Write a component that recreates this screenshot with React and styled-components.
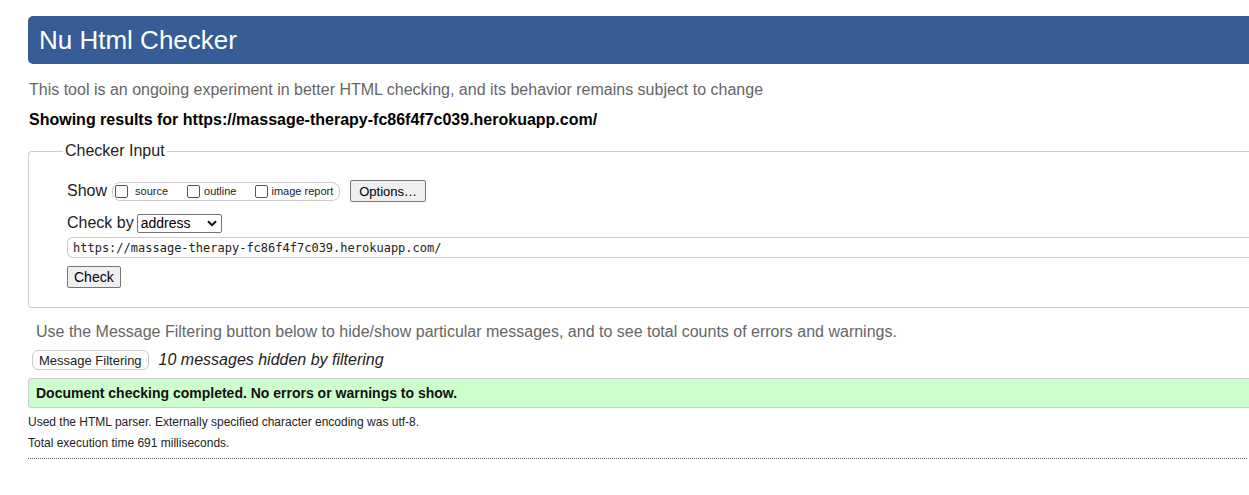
import React from 'react';
import styled, { createGlobalStyle } from 'styled-components';

const GlobalStyle = createGlobalStyle`
  html, body {
    margin: 0;
    padding: 0;
    overflow: hidden;
    background: #fff;
  }
  body {
    font-family: "Liberation Sans", Arial, sans-serif;
    color: #000;
  }
`;

const Page = styled.div`
  padding: 16px 0 30px 28px;
  width: 1250px;
`;

const Header = styled.h1`
  margin: 0;
  height: 48px;
  display: flex;
  align-items: center;
  padding-left: 11px;
  background: #365d95;
  color: #fff;
  font-weight: normal;
  font-size: 26px;
  border-radius: 5px 0 0 5px;
`;

const Tagline = styled.p`
  margin: 17px 0 0 1px;
  font-size: 16px;
  line-height: 18px;
  color: #666;
`;

const Results = styled.p`
  margin: 12px 0 0 1px;
  font-size: 16px;
  line-height: 18px;
  font-weight: bold;
`;

const Fieldset = styled.fieldset`
  margin: 13px 0 0 0;
  padding: 20px 0 19px 38px;
  border: 1px solid #ccc;
  border-right: none;
  border-radius: 4px 0 0 4px;
  min-width: 0;
`;

const Legend = styled.legend`
  margin-left: -4px;
  padding: 0 2px;
  font-size: 16px;
  line-height: 18px;
  color: #222;
`;

const Row = styled.div`
  display: flex;
  align-items: center;
  height: ${p => p.$h || 22}px;
  margin-top: ${p => p.$mt || 0}px;
`;

const Label = styled.span`
  font-size: 16px;
  color: #222;
  margin-right: ${p => p.$mr || 0}px;
`;

const Group = styled.div`
  display: flex;
  align-items: center;
  height: 17px;
  padding: 0 6px 0 2px;
  border: 1px solid #ccc;
  border-radius: 8px;
  margin-right: 10px;
`;

const CheckItem = styled.label`
  display: flex;
  align-items: center;
  font-size: 11px;
  color: #222;
  margin-right: ${p => p.$mr || 0}px;
`;

const Box = styled.span`
  display: inline-block;
  width: 11px;
  height: 11px;
  border: 1px solid #555;
  border-radius: 2px;
  background: #fff;
  margin-right: ${p => p.$gap}px;
`;

const Button = styled.button`
  font-family: "Liberation Sans", Arial, sans-serif;
  font-size: ${p => p.$fs || 13}px;
  height: ${p => p.$h || 22}px;
  padding: 0 ${p => p.$px || 7}px;
  background: #efefef;
  border: 1px solid #767676;
  border-radius: 2px;
  color: #000;
`;

const SelectWrap = styled.div`
  position: relative;
  height: 19px;
`;

const Select = styled.select`
  appearance: none;
  -webkit-appearance: none;
  height: 19px;
  width: 85px;
  padding: 0 0 0 3px;
  font-family: "Liberation Sans", Arial, sans-serif;
  font-size: 14px;
  background: #fff;
  color: #000;
  border: 1px solid #767676;
  border-radius: 2px;
`;

const Chevron = styled.svg`
  position: absolute;
  right: 5px;
  top: 6px;
  pointer-events: none;
`;

const UrlInput = styled.div`
  height: 19px;
  margin-top: 3px;
  display: flex;
  align-items: center;
  padding-left: 5px;
  border: 1px solid #ccc;
  border-right: none;
  border-radius: 6px 0 0 6px;
  font-family: "DejaVu Sans Mono", "Liberation Mono", monospace;
  font-size: 12px;
  color: #222;
`;

const Note = styled.p`
  margin: 15px 0 0 8px;
  font-size: 16px;
  line-height: 18px;
  color: #666;
`;

const FilterButton = styled.button`
  font-family: "Liberation Sans", Arial, sans-serif;
  font-size: 13px;
  height: 20px;
  padding: 0 6px;
  margin-left: 4px;
  background: #fff;
  border: 1px solid #ccc;
  border-radius: 6px;
  color: #222;
`;

const Hidden = styled.em`
  font-size: 16px;
  color: #222;
  margin-left: 10px;
`;

const Success = styled.div`
  margin-top: 7px;
  height: 28px;
  display: flex;
  align-items: center;
  padding-left: 7px;
  background: #ccffcc;
  border: 1px solid #ccc;
  border-right: none;
  border-radius: 4px 0 0 4px;
  font-size: 14px;
  font-weight: bold;
  color: #111;
`;

const Small = styled.p`
  margin: 7px 0 0 0;
  font-size: 12px;
  line-height: 14px;
  color: #222;
`;

const Rule = styled.hr`
  margin: 8px 0 0 0;
  width: 1219px;
  border: none;
  border-top: 1px dotted #666;
`;

const url = 'https://massage-therapy-fc86f4f7c039.herokuapp.com/';

export default function App() {
    return (
        <Page>
            <GlobalStyle />
            <Header>Nu Html Checker</Header>
            <Tagline>This tool is an ongoing experiment in better HTML checking, and its behavior remains subject to change</Tagline>
            <Results>Showing results for {url}</Results>

            <Fieldset>
                <Legend>Checker Input</Legend>
                <Row>
                    <Label $mr={5}>Show</Label>
                    <Group>
                        <CheckItem $mr={19}><Box $gap={7} />source</CheckItem>
                        <CheckItem $mr={19}><Box $gap={4} />outline</CheckItem>
                        <CheckItem><Box $gap={3} />image report</CheckItem>
                    </Group>
                    <Button $fs={13} $px={8}>Options…</Button>
                </Row>
                <Row $mt={10}>
                    <Label $mr={3}>Check by</Label>
                    <SelectWrap>
                        <Select defaultValue="address">
                            <option value="address">address</option>
                            <option value="file">file upload</option>
                            <option value="text">text input</option>
                        </Select>
                        <Chevron width="10" height="7" viewBox="0 0 10 7">
                            <path d="M1 1.2 L5 5.2 L9 1.2" fill="none" stroke="#111" strokeWidth="2" />
                        </Chevron>
                    </SelectWrap>
                </Row>
                <UrlInput>{url}</UrlInput>
                <Row $mt={8}>
                    <Button $fs={14} $px={6}>Check</Button>
                </Row>
            </Fieldset>

            <Note>Use the Message Filtering button below to hide/show particular messages, and to see total counts of errors and warnings.</Note>
            <Row $mt={8}>
                <FilterButton>Message Filtering</FilterButton>
                <Hidden>10 messages hidden by filtering</Hidden>
            </Row>
            <Success>Document checking completed. No errors or warnings to show.</Success>
            <Small>Used the HTML parser. Externally specified character encoding was utf-8.</Small>
            <Small>Total execution time 691 milliseconds.</Small>
            <Rule />
        </Page>
    );
}
